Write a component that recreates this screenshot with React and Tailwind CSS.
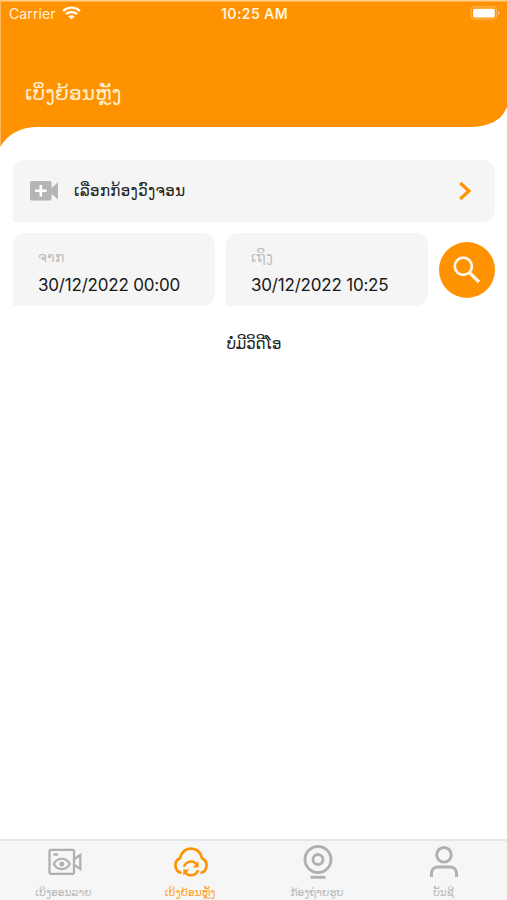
import React from "react";

const latin = "font-['Inter','Liberation_Sans',sans-serif]";
const lao = "font-['DejaVu_Sans','Noto_Sans',sans-serif] whitespace-nowrap";

function StatusBar() {
  return (
    <div className={`${latin} grid h-7 grid-cols-3 items-center pl-[9px] pr-[7px] text-[#fff3dc]`}>
      <div className="flex items-center gap-[6px]">
        <span className="text-[14px] leading-none tracking-[0.1px]">Carrier</span>
        <svg className="-translate-y-px" width="19" height="14" viewBox="0 0 19 14" fill="none" stroke="#fff8ec" strokeWidth="2.4">
          <path d="M1.1 5.1a12 12 0 0 1 16.800 0" />
          <path d="M4 8.200a7.900 7.900 0 0 1 11 0" />
          <path d="M9.500 13.600 6.400 10.500a4.400 4.400 0 0 1 6.200 0z" fill="#fff8ec" stroke="none" />
        </svg>
      </div>
      <span className="text-center text-[14px] font-semibold leading-none tracking-[0.4px]">10:25 AM</span>
      <svg className="-translate-y-px justify-self-end" width="30" height="14" viewBox="0 0 30 14">
        <rect x="1" y="0.800" width="25.500" height="12.400" rx="3.500" fill="none" stroke="#ffb450" strokeWidth="1.200" />
        <rect x="3" y="2.800" width="21.800" height="8.600" rx="1.600" fill="#fff" />
        <path d="M28 5v4.200q1.500-.6 1.500-2.100T28 5z" fill="#ffc780" />
      </svg>
    </div>
  );
}

function Header() {
  return (
    <header className="relative h-[160px]">
      <svg className="absolute inset-0" width="507" height="160" viewBox="0 0 507 160">
        <path d="M0 0H507V107C502 120 490 127 468 127H38C20 127 8 134 0 147Z" fill="#ff9200" />
        <path d="M0 .7H507" stroke="#ffd08c" strokeWidth="1.400" />
        <path d="M.5 0V145" stroke="#ffb85c" />
      </svg>
      <div className="relative">
        <StatusBar />
        <h1 className={`${lao} ml-[25px] mt-[51px] text-[20px] leading-7 tracking-[0.15px] text-[#fff0d2]`}>ເບິ່ງຍ້ອນຫຼັງ</h1>
      </div>
    </header>
  );
}

function CameraPicker() {
  return (
    <button className="flex h-[62px] items-center rounded-xl rounded-bl-none bg-[#f5f5f5] pl-[17px] pr-[23px]">
      <svg width="28" height="20" viewBox="0 0 28 20">
        <path d="M1.500 0H20q1.500 0 1.500 1.500V7L28 1.200V18.500L21.500 13v5q0 1.500-1.500 1.500H1.500Q0 19.500 0 18V1.500Q0 0 1.500 0z" fill="#b5b5b5" />
        <path d="M10.800 4v11.500M5 9.700h11.600" stroke="#fff" strokeWidth="2.600" />
      </svg>
      <span className={`${lao} ml-4 text-[15px] tracking-[0.35px] text-[#222]`}>ເລືອກກ້ອງວົງຈອນ</span>
      <svg className="ml-auto" width="14" height="20" viewBox="0 0 14 20" fill="none" stroke="#ff9200" strokeWidth="3.200">
        <path d="M2.200 2 11 10 2.200 18" />
      </svg>
    </button>
  );
}

function DateField({ label, value }) {
  return (
    <div className="h-[73px] w-[202px] shrink-0 rounded-xl rounded-bl-none bg-[#f5f5f5] pl-[25px] pt-[13px]">
      <div className={`${lao} h-[26px] text-[14px] leading-[22px] tracking-[0.3px] text-[#bcbcbc]`}>{label}</div>
      <div className={`${latin} whitespace-nowrap text-[17px] leading-[26px] tracking-[-0.2px] text-[#181818]`}>{value}</div>
    </div>
  );
}

function OnlineIcon() {
  return (
    <svg className="translate-x-[2px]" width="34" height="28" viewBox="0 0 34 28" fill="none" stroke="#b0b0b0" strokeWidth="2.300">
      <rect x="1.500" y="1.800" width="24.500" height="24" rx="1.500" />
      <path d="M26 11.200 32.300 7v14L26 16.600M5.500 6.500h4.500" />
      <path d="M5.800 16c3.700-7 12.300-7 16 0-3.700 6.800-12.300 6.800-16 0z" strokeWidth="2.200" />
      <circle cx="13.800" cy="16" r="2.500" fill="#b0b0b0" stroke="none" />
    </svg>
  );
}

function PlaybackIcon() {
  return (
    <svg className="translate-x-px" width="38" height="30" viewBox="0 0 38 30" fill="none" stroke="#ff9200" strokeWidth="2.700">
      <path d="M9.500 26A7.800 7.800 0 0 1 8 11.300C9.500 5 13.600 1.700 19 1.700S28.500 5 30 11.300A7.800 7.800 0 0 1 28.500 26" />
      <path d="M12 19.700a7.300 7.300 0 0 1 12.800-2.200M26 23.200a7.300 7.300 0 0 1-12.800 2.200" strokeWidth="2.500" />
      <path d="M26.700 14.500v6h-6zM11.300 28.500v-6h6z" fill="#ff9200" stroke="none" />
    </svg>
  );
}

function WebcamIcon() {
  return (
    <svg className="translate-x-px" width="32" height="34" viewBox="0 0 32 34" fill="none" stroke="#b0b0b0" strokeWidth="2.900">
      <circle cx="16" cy="14.500" r="13" />
      <circle cx="16" cy="14.500" r="5" />
      <path d="M8.500 32.300h15" />
    </svg>
  );
}

function AccountIcon() {
  return (
    <svg width="30" height="32" viewBox="0 0 30 32" fill="none" stroke="#b0b0b0" strokeWidth="2.900">
      <circle cx="15" cy="8.800" r="7.300" />
      <path d="M2.500 31V27a6 6 0 0 1 6-6h13a6 6 0 0 1 6 6v4" />
    </svg>
  );
}

const tabs = [
  { label: "ເບິງອອນລາຍ", icon: OnlineIcon },
  { label: "ເບິງຍ້ອນຫຼັງ", icon: PlaybackIcon, active: true },
  { label: "ກ້ອງຖ່າຍຮູບ", icon: WebcamIcon },
  { label: "ບັນຊີ", icon: AccountIcon },
];

function TabBar() {
  return (
    <nav className="grid h-[61px] grid-cols-4 border-t-2 border-[#e6e6e6] bg-[#f6f6f6]">
      {tabs.map(({ label, icon: Icon, active }) => (
        <div key={label} className="flex flex-col items-center pt-[2px]">
          <div className="flex h-[38px] items-center justify-center">
            <Icon />
          </div>
          <span className={`${lao} mt-[3px] text-[10.5px] leading-4 tracking-[0.1px] ${active ? "text-[#ff9f20]" : "text-[#b8b8b8]"}`}>{label}</span>
        </div>
      ))}
    </nav>
  );
}

export default function App() {
  return (
    <div className="flex h-[900px] w-[507px] flex-col overflow-hidden bg-white">
      <Header />
      <main className="flex flex-1 flex-col pl-[13px] pr-3">
        <CameraPicker />
        <div className="mt-[11px] flex items-center gap-[11px]">
          <DateField label="ຈາກ" value="30/12/2022 00:00" />
          <DateField label="ເຖິງ" value="30/12/2022 10:25" />
          <button className="flex size-[56px] shrink-0 items-center justify-center rounded-full bg-[#ff9200]">
            <svg width="28" height="28" viewBox="0 0 28 28" fill="none" stroke="#fff8ea" strokeWidth="2.700">
              <circle cx="10.300" cy="10.300" r="8.600" />
              <path d="M16.800 16.800 26 26" strokeWidth="3.200" />
            </svg>
          </button>
        </div>
        <p className={`${lao} mt-[26px] text-center text-[15px] leading-6 tracking-[-0.2px] text-[#222]`}>ບໍ່ມີວິດີໂອ</p>
      </main>
      <TabBar />
    </div>
  );
}
